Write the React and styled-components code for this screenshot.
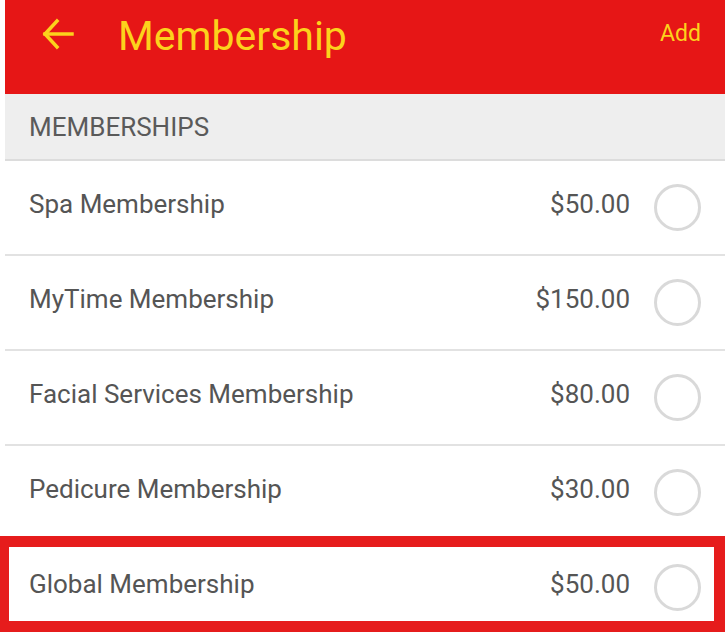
import React from 'react';
import styled, { createGlobalStyle } from 'styled-components';

const GlobalStyle = createGlobalStyle`
    body {
        margin: 0;
        background: #ffffff;
        font-family: Roboto, "Liberation Sans", sans-serif;
    }
`;

const Page = styled.div`
    position: relative;
    width: 725px;
    height: 633px;
    padding-left: 5px;
    box-sizing: border-box;
    overflow: hidden;
    background: #ffffff;
`;

const Toolbar = styled.header`
    display: flex;
    align-items: flex-start;
    height: 94px;
    background: #e61616;
    color: #fcd21c;
`;

const BackButton = styled.button`
    display: flex;
    align-items: center;
    justify-content: center;
    width: 40px;
    height: 40px;
    margin: 14px 0 0 33px;
    padding: 0;
    border: none;
    background: transparent;
    color: inherit;
`;

const Title = styled.h1`
    flex: 1;
    margin: 5px 0 0 40px;
    font-size: 41px;
    font-weight: 400;
    line-height: 62px;
`;

const Action = styled.span`
    margin: 19px 24px 0 0;
    font-size: 23px;
    line-height: 30px;
`;

const SectionHeader = styled.div`
    display: flex;
    align-items: center;
    height: 65px;
    padding-left: 24px;
    background: #eeeeee;
    border-bottom: 2px solid #dcdcdc;
    color: #5a5a5a;
    font-size: 26px;
`;

const Row = styled.div`
    display: flex;
    align-items: center;
    height: 93px;
    padding: 0 24px;
    border-bottom: 2px solid #e2e2e2;
    color: #555555;
    font-size: 26px;
`;

const Name = styled.span`
    flex: 1;
    margin-bottom: 8px;
`;

const Price = styled.span`
    margin-bottom: 8px;
`;

const Radio = styled.span`
    width: 41px;
    height: 41px;
    margin-left: 24px;
    border: 3px solid #d9d9d9;
    border-radius: 50%;
`;

const Highlight = styled.div`
    position: absolute;
    left: 0;
    top: 536px;
    width: 725px;
    height: 96px;
    box-sizing: border-box;
    border: 11px solid #e61c1c;
    border-left-width: 9px;
    pointer-events: none;
`;

const memberships = [
    { name: 'Spa Membership', price: '$50.00' },
    { name: 'MyTime Membership', price: '$150.00' },
    { name: 'Facial Services Membership', price: '$80.00' },
    { name: 'Pedicure Membership', price: '$30.00' },
    { name: 'Global Membership', price: '$50.00' },
];

export default function App() {
    return (
        <Page>
            <GlobalStyle />
            <Toolbar>
                <BackButton aria-label="back">
                    <svg width="34" height="32" viewBox="0 0 34 32" fill="none" stroke="currentColor" strokeWidth="3.5" strokeLinecap="square">
                        <path d="M4 16 H31" />
                        <path d="M16 3 L4 16 L16 29" />
                    </svg>
                </BackButton>
                <Title>Membership</Title>
                <Action>Add</Action>
            </Toolbar>
            <SectionHeader>MEMBERSHIPS</SectionHeader>
            {memberships.map((m) => (
                <Row key={m.name}>
                    <Name>{m.name}</Name>
                    <Price>{m.price}</Price>
                    <Radio />
                </Row>
            ))}
            <Highlight />
        </Page>
    );
}
